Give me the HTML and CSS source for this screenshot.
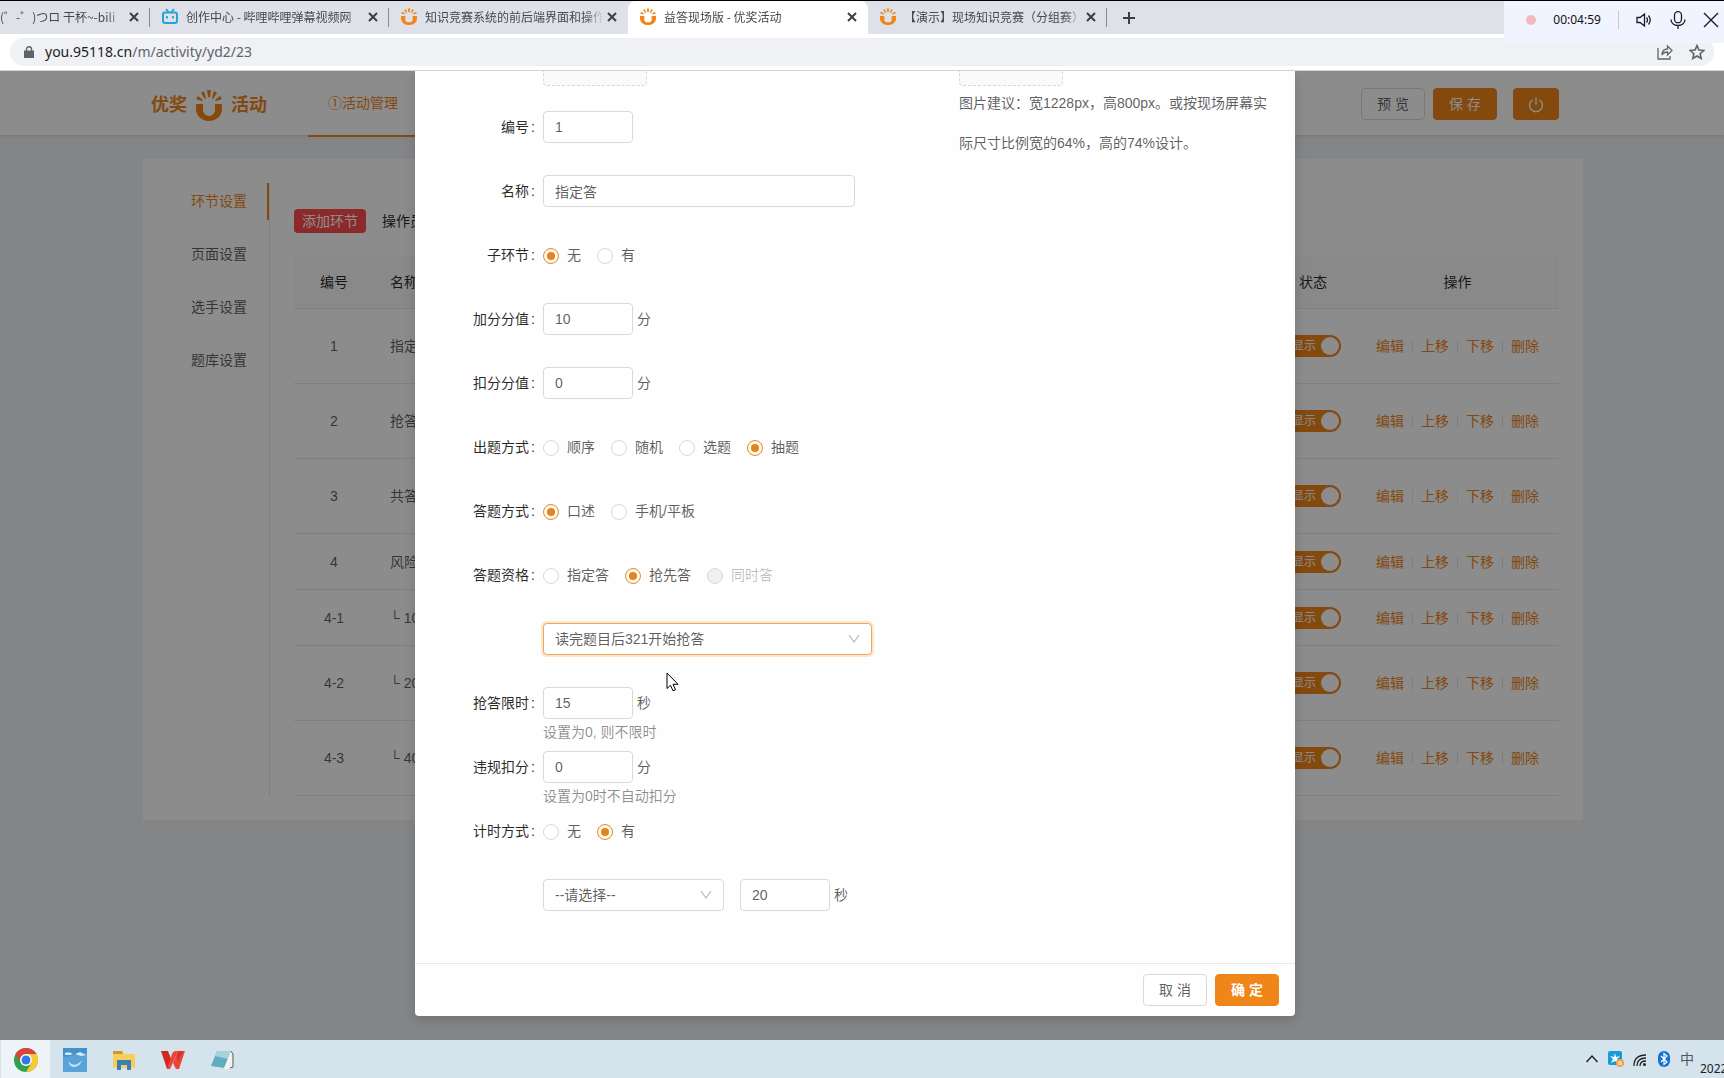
FILE: index.html
```html
<!DOCTYPE html>
<html lang="zh-CN">
<head>
<meta charset="utf-8">
<title>益答现场版 - 优奖活动</title>
<link rel="stylesheet" href="styles.css">
</head>
<body>
<svg class="defs" aria-hidden="true">
  <symbol id="i-u" viewBox="0 0 26 32" preserveAspectRatio="none">
    <path d="M0 15h7v6a6 6 0 0 0 12 0v-6h7v5a13 12 0 0 1-26 0z"/>
    <path d="M11 1h4l-1 7h-2zM5 4l3-2 2 7-1 1zM21 4l-3-2-2 7 1 1zM0 10l2-3 5 4-1 1zM26 10l-2-3-5 4 1 1z"/>
  </symbol>
  <symbol id="i-x" viewBox="0 0 10 10"><path d="M1 1l8 8M9 1l-8 8" fill="none" stroke="currentColor" stroke-width="2"/></symbol>
  <symbol id="i-down" viewBox="0 0 12 12"><path d="M1 2l5 7 5-7" fill="none" stroke="currentColor" stroke-width="1.2"/></symbol>
</svg>

<header class="chrome">
  <div class="tabs">
    <div class="tab tab-first"><span class="tab-title">(゜-゜)つロ 干杯~-bili</span><button class="tab-close" aria-label="关闭"><svg><use href="#i-x"/></svg></button></div>
    <div class="tab">
      <svg class="tab-icon bili" viewBox="0 0 16 16"><path d="M4 .5l2.500 3M12 .5l-2.500 3" stroke="#22a4d6" stroke-width="1.800"/><rect x="1" y="4" width="14" height="10.500" rx="2" fill="none" stroke="#22a4d6" stroke-width="2"/><path d="M5 7.500v2.500M11 7.500v2.500" stroke="#22a4d6" stroke-width="1.800"/></svg>
      <span class="tab-title">创作中心 - 哔哩哔哩弹幕视频网</span><button class="tab-close" aria-label="关闭"><svg><use href="#i-x"/></svg></button>
    </div>
    <div class="tab tab-before">
      <svg class="tab-icon"><use href="#i-u"/></svg>
      <span class="tab-title">知识竞赛系统的前后端界面和操作</span><button class="tab-close" aria-label="关闭"><svg><use href="#i-x"/></svg></button>
    </div>
    <div class="tab tab-active">
      <svg class="tab-icon"><use href="#i-u"/></svg>
      <span class="tab-title">益答现场版 - 优奖活动</span><button class="tab-close" aria-label="关闭"><svg><use href="#i-x"/></svg></button>
    </div>
    <div class="tab">
      <svg class="tab-icon"><use href="#i-u"/></svg>
      <span class="tab-title">【演示】现场知识竞赛（分组赛）</span><button class="tab-close" aria-label="关闭"><svg><use href="#i-x"/></svg></button>
    </div>
    <button class="tab-new" aria-label="新标签页"><svg viewBox="0 0 12 12"><path d="M6 0v12M0 6h12" stroke="currentColor" stroke-width="2"/></svg></button>
  </div>
  <div class="toolbar">
    <div class="omnibox">
      <svg class="lock" viewBox="0 0 10 12"><path d="M0 4.500h10V12H0z" fill="#5f6368"/><path d="M2.500 5V3a2.500 2.200 0 0 1 5 0v2" fill="none" stroke="#5f6368" stroke-width="1.400"/></svg>
      <span class="url">you.95118.cn<span class="url-path">/m/activity/yd2/23</span></span>
      <svg class="box-icon" viewBox="0 0 16 16"><path d="M1 4v11h12v-3M5 11c0-4 2-6 5.500-6V2L15 6.500 10.500 11V8C8 8 6 9 5 11z" fill="none" stroke="#5f6368" stroke-width="1.300"/></svg>
      <svg class="box-icon" viewBox="0 0 16 16"><path d="M8 1.500l1.900 4.600 4.900.4-3.700 3.200 1.100 4.800L8 12l-4.200 2.500 1.100-4.800L1.200 6.500l4.900-.4z" fill="none" stroke="#5f6368" stroke-width="1.600"/></svg>
    </div>
  </div>
  <div class="recorder">
    <span class="rec-dot"></span><span class="rec-time">00:04:59</span><span class="rec-sep"></span>
    <svg viewBox="0 0 16 16"><path d="M1 5.500v5h3L8.500 14V2L4 5.500zM10.500 5.500q2 2.500 0 5M12.500 3.500q3.500 4.500 0 9" fill="none" stroke="#1b1b2a" stroke-width="1.300"/></svg>
    <svg viewBox="0 0 16 18"><rect x="4.500" y=".7" width="7" height="11" rx="3.500" fill="none" stroke="#1b1b2a" stroke-width="1.300"/><path d="M1 8.500c0 8 14 8 14 0M8 14.500V18" fill="none" stroke="#1b1b2a" stroke-width="1.300"/></svg>
    <svg viewBox="0 0 16 16"><path d="M1 1l14 14M15 1L1 15" stroke="#1b1b2a" stroke-width="1.400"/></svg>
  </div>
</header>

<div class="viewport">
  <div class="app">
    <header class="app-header">
      <div class="app-header-inner">
        <div class="logo"><span>优奖</span><svg><use href="#i-u"/></svg><span>活动</span></div>
        <nav class="app-nav"><a href="#">①活动管理</a></nav>
        <div class="app-actions">
          <button class="btn btn-ghost">预 览</button>
          <button class="btn btn-primary">保 存</button>
          <button class="btn btn-primary btn-power" aria-label="退出"><svg viewBox="0 0 16 16"><path d="M4.500 2.800a6.500 6.500 0 1 0 7 0M8 .5v7" fill="none" stroke="currentColor" stroke-width="1.400"/></svg></button>
        </div>
      </div>
    </header>
    <main class="card">
      <nav class="side">
        <a href="#" class="side-active">环节设置</a>
        <a href="#">页面设置</a>
        <a href="#">选手设置</a>
        <a href="#">题库设置</a>
      </nav>
      <section class="content">
        <div class="content-bar"><button class="btn-add">添加环节</button><span>操作员</span></div>
        <table class="stages">
          <thead><tr><th class="c-no">编号</th><th class="c-name">名称</th><th class="c-state">状态</th><th class="c-ops">操作</th></tr></thead>
          <tbody>
            <tr><td>1</td><td class="c-name">指定答</td><td><button class="switch" role="switch" aria-checked="true">显示</button></td><td><div class="ops"><a href="#">编辑</a><a href="#">上移</a><a href="#">下移</a><a href="#">删除</a></div></td></tr>
            <tr><td>2</td><td class="c-name">抢答</td><td><button class="switch" role="switch" aria-checked="true">显示</button></td><td><div class="ops"><a href="#">编辑</a><a href="#">上移</a><a href="#">下移</a><a href="#">删除</a></div></td></tr>
            <tr><td>3</td><td class="c-name">共答</td><td><button class="switch" role="switch" aria-checked="true">显示</button></td><td><div class="ops"><a href="#">编辑</a><a href="#">上移</a><a href="#">下移</a><a href="#">删除</a></div></td></tr>
            <tr class="short"><td>4</td><td class="c-name">风险</td><td><button class="switch" role="switch" aria-checked="true">显示</button></td><td><div class="ops"><a href="#">编辑</a><a href="#">上移</a><a href="#">下移</a><a href="#">删除</a></div></td></tr>
            <tr class="short"><td>4-1</td><td class="c-name">└ 10</td><td><button class="switch" role="switch" aria-checked="true">显示</button></td><td><div class="ops"><a href="#">编辑</a><a href="#">上移</a><a href="#">下移</a><a href="#">删除</a></div></td></tr>
            <tr><td>4-2</td><td class="c-name">└ 20</td><td><button class="switch" role="switch" aria-checked="true">显示</button></td><td><div class="ops"><a href="#">编辑</a><a href="#">上移</a><a href="#">下移</a><a href="#">删除</a></div></td></tr>
            <tr><td>4-3</td><td class="c-name">└ 40</td><td><button class="switch" role="switch" aria-checked="true">显示</button></td><td><div class="ops"><a href="#">编辑</a><a href="#">上移</a><a href="#">下移</a><a href="#">删除</a></div></td></tr>
          </tbody>
        </table>
      </section>
    </main>
  </div>

  <div class="mask">
    <form class="modal" role="dialog" aria-label="环节设置">
      <div class="modal-body">
        <div class="col">
          <div class="upload"></div>
          <div class="row"><label class="label" for="no">编号</label><div class="ctl"><input class="input" id="no" value="1"></div></div>
          <div class="row"><label class="label" for="name">名称</label><div class="ctl"><input class="input input-wide" id="name" value="指定答"></div></div>
          <div class="row"><span class="label">子环节</span><div class="ctl">
            <label class="radio"><input type="radio" name="sub" checked>无</label>
            <label class="radio"><input type="radio" name="sub">有</label></div></div>
          <div class="row"><label class="label" for="plus">加分分值</label><div class="ctl"><input class="input" id="plus" value="10"><span>分</span></div></div>
          <div class="row"><label class="label" for="minus">扣分分值</label><div class="ctl"><input class="input" id="minus" value="0"><span>分</span></div></div>
          <div class="row"><span class="label">出题方式</span><div class="ctl">
            <label class="radio"><input type="radio" name="pick">顺序</label>
            <label class="radio"><input type="radio" name="pick">随机</label>
            <label class="radio"><input type="radio" name="pick">选题</label>
            <label class="radio"><input type="radio" name="pick" checked>抽题</label></div></div>
          <div class="row"><span class="label">答题方式</span><div class="ctl">
            <label class="radio"><input type="radio" name="way" checked>口述</label>
            <label class="radio"><input type="radio" name="way">手机/平板</label></div></div>
          <div class="row"><span class="label">答题资格</span><div class="ctl">
            <label class="radio"><input type="radio" name="who">指定答</label>
            <label class="radio"><input type="radio" name="who" checked>抢先答</label>
            <label class="radio radio-off"><input type="radio" name="who" disabled>同时答</label></div></div>
          <div class="row"><div class="ctl ctl-bare">
            <div class="select select-wide select-focus"><select aria-label="抢答规则"><option>读完题目后321开始抢答</option></select><svg><use href="#i-down"/></svg></div></div></div>
          <div class="row"><label class="label" for="limit">抢答限时</label><div class="ctl"><input class="input" id="limit" value="15"><span>秒</span></div><p class="help">设置为0, 则不限时</p></div>
          <div class="row"><label class="label" for="foul">违规扣分</label><div class="ctl"><input class="input" id="foul" value="0"><span>分</span></div><p class="help">设置为0时不自动扣分</p></div>
          <div class="row"><span class="label">计时方式</span><div class="ctl">
            <label class="radio"><input type="radio" name="timer">无</label>
            <label class="radio"><input type="radio" name="timer" checked>有</label></div></div>
          <div class="row"><div class="ctl ctl-bare">
            <div class="select select-timer"><select aria-label="计时类型"><option>--请选择--</option></select><svg><use href="#i-down"/></svg></div>
            <input class="input" aria-label="计时秒数" value="20"><span>秒</span></div></div>
        </div>
        <div class="col">
          <div class="upload"></div>
          <div class="tips"><p>图片建议：宽1228px，高800px。或按现场屏幕实</p><p>际尺寸比例宽的64%，高的74%设计。</p></div>
        </div>
      </div>
      <div class="modal-foot">
        <button type="button" class="btn">取 消</button>
        <button type="button" class="btn btn-primary btn-ok">确 定</button>
      </div>
    </form>
  </div>
  <svg class="cursor" viewBox="0 0 13 20"><path d="M1 1v15.500l3.500-3.200 2.500 5.500 2.500-1-2.500-5.500h5z" fill="#fff" stroke="#000"/></svg>
</div>

<footer class="taskbar">
  <div class="apps">
    <button class="app-btn app-on" aria-label="Chrome"><svg viewBox="0 0 24 24"><circle cx="12" cy="12" r="12" fill="#34a04c"/><path d="M12 6h10.400A12 12 0 0 0 1.600 6l5 8z" fill="#d8433a"/><path d="M22.400 6H12l5.500 9L12 24A12 12 0 0 0 22.400 6z" fill="#f9c931"/><circle cx="12" cy="12" r="6" fill="#fff"/><circle cx="12" cy="12" r="4.500" fill="#3477e6"/></svg></button>
    <button class="app-btn" aria-label="云盘"><svg viewBox="0 0 24 24"><path d="M0 0h24v24H0z" fill="#5aa3d8"/><path d="M0 0h24v5L0 9z" fill="#4690cc"/><path d="M2 5q4-2 8 1l-3 1H2zM12 6l5-2 6 3-5 1z" fill="#d5ebf8"/><path d="M5 13q7 8 14-1-2 7-8 7-4 0-6-6z" fill="#c5e4f6"/></svg></button>
    <button class="app-btn" aria-label="文件资源管理器"><svg viewBox="0 0 24 24"><path d="M1 3h9l2 3h11v14H1z" fill="#f8cf56"/><path d="M1 3h9l1 3H1z" fill="#c89a2d"/><path d="M5 12h14v10h-4v-5H9v5H5z" fill="#3c7fb8"/></svg></button>
    <button class="app-btn" aria-label="WPS"><svg viewBox="0 0 24 24"><path d="M0 3h7l4 10-3 8H6z" fill="#cf2a20"/><path d="M6 21L11 6q1-3 4-3h2l-8 18zM12 15l3-7 2 5 3-10h4l-6 18h-3z" fill="#ee4435"/><path d="M17 3h5l-5 11-2-6z" fill="#d8322a"/></svg></button>
    <button class="app-btn" aria-label="记事本"><svg viewBox="0 0 24 24"><path d="M7 3h14l-6 17L1 18z" fill="#62acc2"/><path d="M7 3h14l-3 8-13-3z" fill="#a3d2dd"/><path d="M21 3l2 16-8 3-1-2z" fill="#f3f4f2"/><path d="M21 3l2 3v13l-3 1" fill="none" stroke="#56605f"/></svg></button>
  </div>
  <div class="tray">
    <svg viewBox="0 0 16 16"><path d="M2.500 11L8 5l5.500 6" fill="none" stroke="#222" stroke-width="1.400"/></svg>
    <svg viewBox="0 0 16 16"><rect width="14" height="14" rx="2" fill="#199bd8"/><path d="M7 2l1 4 4-1-3 3 2 4-4-2-4 2 2-4-3-3 4 1z" fill="#fff"/><circle cx="12" cy="12" r="4" fill="#f0a14a"/><path d="M10 11h4M10 13h4" stroke="#fff"/></svg>
    <svg viewBox="0 0 16 16"><path d="M2 15Q2 4 14 4M5 15Q5 7 14 7M8 15q0-5 6-5" fill="none" stroke="#222" stroke-width="1.300"/><circle cx="12.500" cy="13.500" r="1.500" fill="#222"/></svg>
    <svg viewBox="0 0 16 16"><rect x="2" width="12" height="16" rx="6" fill="#1572d3"/><path d="M5 5l6 6-3 2.500v-11L11 5l-6 6" fill="none" stroke="#fff" stroke-width="1.200"/></svg>
    <span class="ime">中</span>
    <div class="clock"><div>9:04<br>2022/3/9</div></div>
  </div>
</footer>
</body>
</html>
```
FILE: styles.css
```css
:root {
  --orange: #f08519;
  --text: rgba(0, 0, 0, .65);
  --heading: rgba(0, 0, 0, .85);
  --line: #d9d9d9;
}
* { box-sizing: border-box; }
body {
  margin: 0;
  height: 100vh;
  display: flex;
  flex-direction: column;
  overflow: hidden;
  font: 14px/20px "Liberation Sans", "Noto Sans CJK SC", sans-serif;
  color: var(--text);
}
p { margin: 0; }
a { color: inherit; text-decoration: none; }
button, input, select { font: inherit; color: inherit; }
button { border: 0; padding: 0; background: none; }
.defs { display: none; }

/* browser window */
.chrome { position: relative; border-top: 1px solid #000; border-bottom: 1px solid #d2d3d6; background: #fff; }
.tabs { display: flex; height: 33px; background: #dee1e8; font: 12px/20px "Noto Sans CJK SC", sans-serif; color: #45484d; }
.tab { width: 239px; display: flex; align-items: center; padding: 0 10px 2px 12px; gap: 8px; position: relative; }
.tab::after { content: ""; position: absolute; right: 0; top: 7px; height: 19px; border-right: 1px solid #888b91; }
.tab-first { width: 150px; padding-left: 0; }
.tab-active { background: #fff; border-radius: 8px 8px 0 0; width: 240px; }
.tab-active::after, .tab-before::after { display: none; }
.tab-icon { width: 16px; height: 17px; fill: var(--orange); flex: none; }
.tab-title {
  flex: 1; overflow: hidden; white-space: nowrap; margin-right: -6px;
  -webkit-mask-image: linear-gradient(to left, transparent, #000 20px);
  mask-image: linear-gradient(to left, transparent, #000 20px);
}
.tab-close { width: 12px; height: 20px; display: flex; align-items: center; justify-content: center; color: #3c4043; }
.tab-close svg { width: 10px; height: 10px; }
.tab-new { width: 44px; padding-bottom: 3px; color: #3c4043; }
.tab-new svg { width: 12px; height: 12px; vertical-align: middle; }
.toolbar { height: 36px; padding: 4px 10px; }
.omnibox { height: 28px; border-radius: 14px; background: #f0f1f5; display: flex; align-items: center; padding: 0 9px 0 14px; gap: 16px; }
.lock { width: 10px; height: 12px; }
.url { flex: 1; font-family: "Noto Sans", sans-serif; color: #202124; margin-left: -5px; }
.url-path { color: #5f6368; }
.box-icon { width: 16px; height: 16px; }
.recorder {
  position: absolute; right: 0; top: 0; width: 220px; height: 42px;
  padding: 0 5px 4px 22px; display: flex; align-items: center; justify-content: space-between;
  background: #f1f3fe; color: #111; font: 12px/20px "Noto Sans", sans-serif;
}
.recorder svg { width: 16px; height: 18px; }
.rec-dot { width: 10px; height: 10px; border-radius: 5px; background: #f1b9bd; }
.rec-sep { height: 18px; border-left: 1px solid #c5c7d0; }

/* page under the dialog */
.viewport { position: relative; flex: 1; overflow: hidden; background: #f0f2f5; }
.app-header { height: 64px; background: #fff; box-shadow: 0 1px 4px rgba(0, 21, 41, .12); position: relative; }
.app { padding-left: 2px; }
.app-header { margin-left: -2px; padding-left: 2px; }
.app-header-inner { max-width: 1440px; margin: 0 auto; padding: 0 24px 0 8px; display: flex; }
.logo { display: flex; align-items: center; gap: 9px; height: 68px; color: var(--orange); font-size: 18px; font-weight: 700; }
.logo svg { width: 26px; height: 32px; fill: var(--orange); }
.app-nav { margin-left: 41px; color: var(--orange); }
.app-nav a { display: block; height: 66px; line-height: 64px; padding: 0 20px; border-bottom: 2px solid var(--orange); }
.app-actions { margin-left: auto; padding-top: 17px; display: flex; gap: 8px; }
.btn { height: 32px; min-width: 64px; border: 1px solid var(--line); border-radius: 4px; background: #fff; padding: 0 14px; }
.btn-primary { background: var(--orange); border-color: var(--orange); color: #fff; }
.btn-power { min-width: 46px; margin-left: 8px; }
.btn-power svg { width: 16px; height: 16px; vertical-align: middle; }
.card { max-width: 1440px; margin: 24px auto 0; background: #fff; padding: 24px; display: flex; gap: 24px; }
.side { width: 103px; display: flex; flex-direction: column; gap: 16px; border-right: 1px solid #e8e8e8; }
.side a { height: 37px; line-height: 37px; padding-left: 24px; }
.side .side-active { color: var(--orange); border-right: 2px solid var(--orange); }
.content { flex: 1; padding-top: 26px; }
.content-bar { display: flex; gap: 16px; align-items: center; height: 24px; margin-bottom: 23px; color: var(--heading); }
.btn-add { height: 24px; padding: 0 8px; border-radius: 4px; background: #ff4d4f; color: #fff; }
.stages { width: 100%; table-layout: fixed; border-collapse: separate; border-spacing: 0; text-align: center; }
.stages th { height: 53px; font-weight: 400; color: var(--heading); background: #fafafa; }
.stages th, .stages td { padding: 0; border-bottom: 1px solid #e8e8e8; }
.stages td { height: 75px; }
.stages .short td { height: 56px; }
.stages .c-no { width: 80px; }
.stages .c-state { width: 86px; }
.stages .c-ops { width: 203px; }
.stages .c-name { text-align: left; padding-left: 16px; }
.switch {
  width: 56px; height: 22px; border-radius: 11px; background: var(--orange); color: #fff;
  font-size: 12px; line-height: 22px; padding: 0 2px 0 7px;
  display: flex; align-items: center; justify-content: space-between; margin: 0 auto; white-space: nowrap;
}
.switch::after { content: ""; width: 18px; height: 18px; border-radius: 9px; background: #fff; }
.ops { display: flex; justify-content: center; align-items: center; color: var(--orange); }
.ops a + a::before { content: ""; display: inline-block; height: 13px; margin: 0 8px; border-left: 1px solid #e8e8e8; vertical-align: -2px; }

/* dialog */
.mask { position: absolute; inset: 0; background: rgba(0, 0, 0, .45); padding-right: 14px; }
.modal { max-width: 880px; margin: 0 auto; background: #fefefe; border-radius: 0 0 4px 4px; box-shadow: 0 4px 12px rgba(0, 0, 0, .15); }
.modal-body { padding: 0 24px 24px; display: flex; }
.col { flex: 1; min-width: 0; }
.upload { height: 15px; width: 104px; margin-left: 104px; border: 1px dashed var(--line); border-top: 0; border-radius: 0 0 4px 4px; background: #fafafa; }
.upload + .row { margin-top: 21px; }
.row { height: 64px; display: grid; grid-template-columns: 25% 75%; grid-template-rows: 40px 24px; }
.label { line-height: 40px; text-align: right; color: var(--heading); padding-right: 8px; }
.label::after { content: ":"; margin-left: 2px; }
.ctl { display: flex; align-items: center; gap: 4px; white-space: nowrap; }
.ctl-bare { grid-column: 2; }
.input { width: 90px; height: 32px; padding: 0 11px; border: 1px solid var(--line); border-radius: 4px; background: #fff; outline: 0; }
.input-wide { width: 100%; }
.radio { display: flex; align-items: center; gap: 8px; margin-right: 12px; }
.radio input { appearance: none; width: 16px; height: 16px; margin: 2px 0 0; border: 1px solid var(--line); border-radius: 8px; background: #fff; display: grid; place-items: center; }
.radio input:checked { border-color: #dd8a33; background: #fffae8; }
.radio input:checked::before { content: ""; width: 8px; height: 8px; border-radius: 4px; background: #e08428; }
.radio input:disabled { background: #f0f0f0; }
.radio-off { color: rgba(0, 0, 0, .25); }
.select { position: relative; flex: none; height: 32px; }
.select select { appearance: none; width: 100%; height: 32px; padding: 0 11px; border: 1px solid var(--line); border-radius: 4px; background: #fff; outline: 0; }
.select svg { position: absolute; right: 12px; top: 10px; width: 12px; height: 12px; color: #b5b5b5; pointer-events: none; }
.select-wide { width: 329px; }
.select-timer { width: 181px; margin-right: 12px; }
.select-focus select { border-color: #f0a655; box-shadow: 0 0 0 2px rgba(240, 133, 25, .2); }
.help { grid-column: 2; line-height: 18px; color: rgba(0, 0, 0, .45); }
.tips { margin-left: 104px; display: grid; gap: 6px; line-height: 34px; white-space: nowrap; }
.modal-foot { border-top: 1px solid #e8e8e8; padding: 10px 16px; display: flex; justify-content: flex-end; gap: 8px; }
.btn-ok { font-weight: 700; }
.cursor { position: absolute; left: 666px; top: 601px; width: 13px; height: 20px; }

/* desktop taskbar */
.taskbar { height: 38px; background: #d5e3ed; display: flex; justify-content: space-between; color: #222; }
.apps { display: flex; padding-left: 1px; }
.app-btn { width: 49px; height: 38px; display: grid; place-items: center; padding-top: 2px; }
.app-on { background: #edf3f7; }
.app-btn svg { width: 24px; height: 24px; }
.tray { display: flex; align-items: center; gap: 8px; }
.tray svg { width: 16px; height: 16px; }
.ime { color: #555; }
.clock { width: 24px; overflow: hidden; font: 12px/20px "Noto Sans", sans-serif; margin-left: -2px; }
.clock div { width: max-content; text-align: right; }
```
